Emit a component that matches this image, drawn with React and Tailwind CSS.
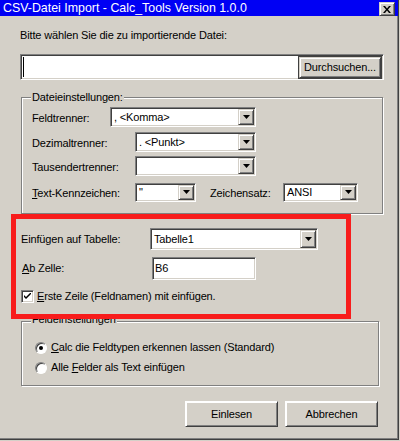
import React from 'react';

// --- Win2000 style bevels ---
const sunken = "border border-t-[#808080] border-l-[#808080] border-r-white border-b-white shadow-[inset_1px_1px_0_#404040,inset_-1px_-1px_0_#d4d0c8]";
const raised = "border border-t-[#d4d0c8] border-l-[#d4d0c8] border-r-[#404040] border-b-[#404040] shadow-[inset_1px_1px_0_white,inset_-1px_-1px_0_#808080] bg-[#d4d0c8]";
const etched = "border border-[#808080] shadow-[1px_1px_0_white,inset_1px_1px_0_white]";

const Arrow = () => (
    <svg width="7" height="4" viewBox="0 0 7 4">
        <polygon points="0,0 7,0 3.5,4" fill="#000" />
    </svg>
);

const Combo = ({ value, className }) => (
    <div className={`flex p-[1px] bg-white ${sunken} ${className}`}>
        <span className="flex-1 pl-[2px] leading-[16px] self-center whitespace-pre">{value}</span>
        <div className={`w-[16px] h-full flex items-center justify-center ${raised}`}>
            <Arrow />
        </div>
    </div>
);

const Group = ({ title, className, legendClass = "top-[-7px]", children }) => (
    <div className={`relative ${etched} ${className}`}>
        <span className={`absolute left-[9px] px-[1px] bg-[#d4d0c8] leading-[13px] ${legendClass}`}>{title}</span>
        {children}
    </div>
);

const Radio = ({ checked, children }) => (
    <div className="flex items-center h-[13px]">
        <div className="w-[12px] h-[12px] rounded-full border border-t-[#808080] border-l-[#808080] border-r-white border-b-white bg-white flex items-center justify-center shadow-[inset_1px_1px_0_#404040]">
            {checked && <div className="w-[4px] h-[4px] rounded-full bg-black" />}
        </div>
        <span className="ml-[4px]">{children}</span>
    </div>
);

export default function App() {
    return (
        <div className="w-[400px] h-[441px] bg-[#d4d0c8] font-['Liberation_Sans',Arial,sans-serif] text-[11px] tracking-[-0.15px] text-black leading-[13px] overflow-hidden">
            <div className="relative w-[399px] h-[440px] border-r border-b border-[#404040] shadow-[inset_-1px_-1px_0_#808080] flex flex-col">
                {/* Title bar */}
                <div className="h-[16px] bg-[#0000f4] flex items-start justify-between">
                    <span className="text-white text-[12.4px] tracking-normal leading-[16px] pl-[3px]">CSV-Datei Import - Calc_Tools Version 1.0.0</span>
                    <div className={`w-[16px] h-[14px] mt-[2px] mr-[3px] flex items-center justify-center ${raised}`}>
                        <svg width="8" height="7" viewBox="0 0 8 7">
                            <path d="M0 0 L2 0 L4 2.5 L6 0 L8 0 L5 3.5 L8 7 L6 7 L4 4.5 L2 7 L0 7 L3 3.5 Z" fill="#000" />
                        </svg>
                    </div>
                </div>

                <div className="flex flex-col px-[20px]">
                    <div className="mt-[13px]">Bitte wählen Sie die zu importierende Datei:</div>

                    {/* File input */}
                    <div className={`mt-[12px] w-[364px] h-[26px] flex p-[1px] bg-white ${sunken}`}>
                        <div className="flex-1 flex items-center">
                            <div className="w-[1px] h-[20px] bg-black ml-[1px]" />
                        </div>
                        <div className="w-[84px] h-[23px] border border-[#404040] flex">
                            <div className={`flex-1 flex items-center justify-center ${raised}`}>Durchsuchen...</div>
                        </div>
                    </div>

                    {/* Dateieinstellungen */}
                    <Group title="Dateieinstellungen:" className="mt-[17px] ml-[1px] w-[362px] h-[117px] pl-[10px] pt-[9px] flex flex-col">
                        <div className="flex items-center h-[20px]">
                            <span className="w-[78px] pt-[2px]">Feldtrenner:</span>
                            <Combo value=", <Komma>" className="w-[146px] h-[20px]" />
                        </div>
                        <div className="flex items-center h-[20px] mt-[5px]">
                            <span className="w-[103px] pt-[2px]">Dezimaltrenner:</span>
                            <Combo value=". <Punkt>" className="w-[121px] h-[20px]" />
                        </div>
                        <div className="flex items-center h-[20px] mt-[4px]">
                            <span className="w-[103px] pt-[2px]">Tausendertrenner:</span>
                            <Combo value="" className="w-[121px] h-[20px]" />
                        </div>
                        <div className="flex items-center h-[20px] mt-[6px]">
                            <span className="w-[103px] pt-[2px]"><u>T</u>ext-Kennzeichen:</span>
                            <Combo value={'"'} className="w-[61px] h-[19px]" />
                            <span className="ml-[14px] w-[73px] pt-[2px]">Zeichensatz:</span>
                            <Combo value="ANSI" className="w-[75px] h-[19px]" />
                        </div>
                    </Group>

                    {/* Tabelle / Zelle */}
                    <div className="flex items-center h-[22px] mt-[14px] ml-[1px]">
                        <span className="w-[129px] pt-[1px]">Einfügen auf Tabelle:</span>
                        <Combo value="Tabelle1" className="w-[168px] h-[22px]" />
                    </div>
                    <div className="flex items-center h-[23px] mt-[7px] ml-[2px]">
                        <span className="w-[130px]"><u>A</u>b Zelle:</span>
                        <div className={`w-[104px] h-[23px] bg-white flex items-center pl-[2px] ${sunken}`}>B6</div>
                    </div>
                    <div className="flex items-center h-[13px] mt-[10px] ml-[1px]">
                        <div className={`w-[13px] h-[13px] bg-white flex items-center justify-center ${sunken}`}>
                            <svg width="7" height="7" viewBox="0 0 7 7">
                                <path d="M0 2 L0 4 L2 6 L7 1 L7 -1 L2 4 Z" fill="#000" />
                            </svg>
                        </div>
                        <span className="ml-[3px]"><u>E</u>rste Zeile (Feldnamen) mit einfügen.</span>
                    </div>

                    {/* Feldeinstellungen */}
                    <Group title="Feldeinstellungen" legendClass="top-[-9px]" className="mt-[18px] ml-[1px] w-[358px] h-[65px] pl-[13px] pt-[19px] flex flex-col gap-[7px]">
                        <Radio checked><u>C</u>alc die Feldtypen erkennen lassen (Standard)</Radio>
                        <Radio>Alle <u>F</u>elder als Text einfügen</Radio>
                    </Group>

                    {/* Buttons */}
                    <div className="flex gap-[7px] mt-[15px] ml-[165px]">
                        <div className={`w-[93px] h-[26px] flex items-center justify-center border-t-white border-l-white ${raised}`}>Einlesen</div>
                        <div className={`w-[93px] h-[26px] flex items-center justify-center border-t-white border-l-white ${raised}`}>Abbrechen</div>
                    </div>
                </div>

                {/* highlight overlay */}
                <div className="absolute left-[11px] top-[214px] w-[340px] h-[105px] border-[5px] border-[#f81c1c] pointer-events-none" />
            </div>
        </div>
    );
}
